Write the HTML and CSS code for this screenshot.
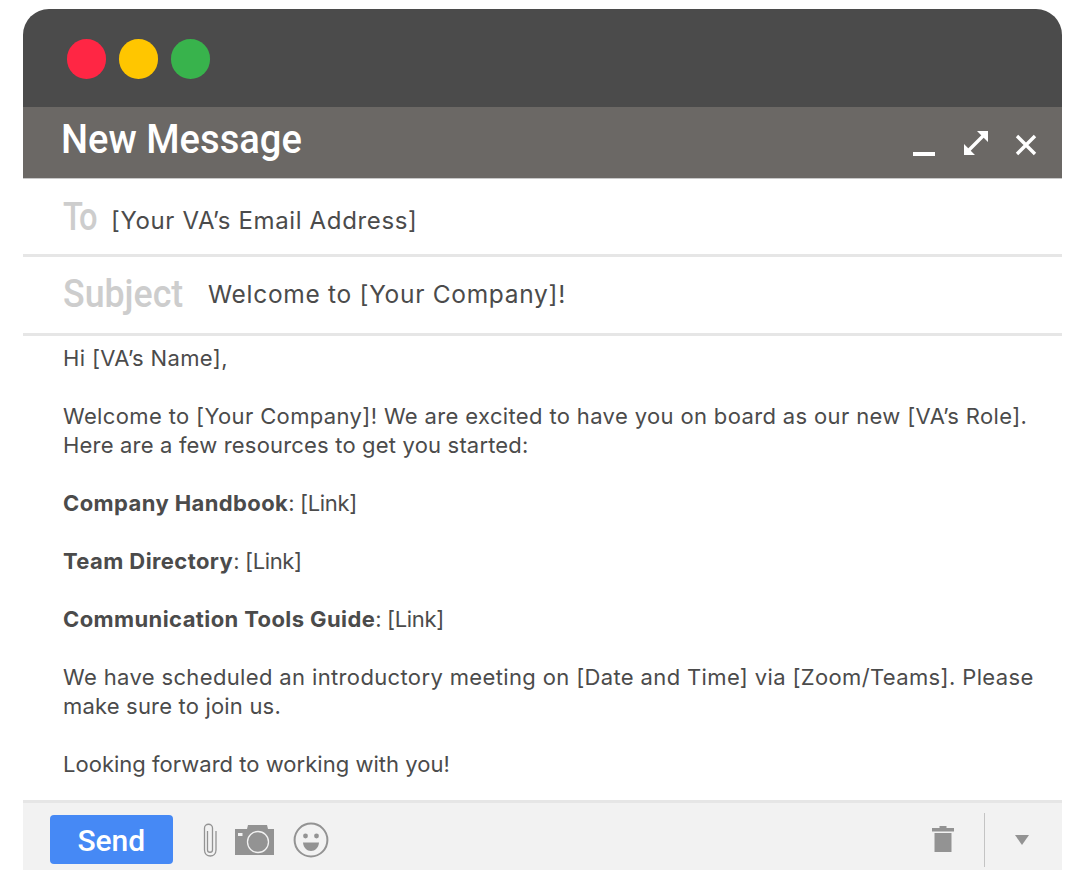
FILE: index.html
```html
<!DOCTYPE html>
<html lang="en">
<head>
<meta charset="utf-8">
<title>New Message</title>
<link rel="stylesheet" href="styles.css">
</head>
<body>
<main class="window">
  <div class="chrome">
    <span class="dot dot-red"></span>
    <span class="dot dot-yellow"></span>
    <span class="dot dot-green"></span>
  </div>
  <header class="titlebar">
    <h1 class="title">New Message</h1>
    <div class="controls">
      <svg class="ctl ctl-min" viewBox="0 0 22 4" width="22" height="4"><rect width="22" height="4" fill="#fff"/></svg>
      <svg class="ctl ctl-expand" viewBox="0 0 24 24" width="24" height="24"><path d="M24 0V11L13 0ZM0 24V13L11 24Z" fill="#fff"/><path d="M5 19 19 5" stroke="#fff" stroke-width="3.4" fill="none"/></svg>
      <svg class="ctl" viewBox="0 0 22 22" width="22" height="22"><path d="M2 2 20 20M20 2 2 20" stroke="#fff" stroke-width="3.4" fill="none"/></svg>
    </div>
  </header>
  <div class="field field-to">
    <span class="field-label">To</span>
    <span class="field-value">[Your VA’s Email Address]</span>
  </div>
  <div class="field field-subject">
    <span class="field-label">Subject</span>
    <span class="field-value">Welcome to [Your Company]!</span>
  </div>
  <section class="message">
    <p>Hi [VA’s Name],</p>
    <p>Welcome to [Your Company]! We are excited to have you on board as our new [VA’s Role].<br><span class="snug">Here are a few resources to get you started:</span></p>
    <p><strong>Company Handbook</strong><span class="link">: [Link]</span></p>
    <p><strong>Team Directory</strong><span class="link">: [Link]</span></p>
    <p><strong>Communication Tools Guide</strong><span class="link">: [Link]</span></p>
    <p>We have scheduled an introductory meeting on [Date and Time] via [Zoom/Teams]. Please<br><span class="snug">make sure to join us.</span></p>
    <p class="closing">Looking forward to working with you!</p>
  </section>
  <footer class="toolbar">
    <button class="send" type="button">Send</button>
    <svg class="clip" viewBox="0 0 16 36" width="16" height="36"><path d="M5.500 9V28C5.500 31 10.500 31 10.500 28V6C10.500 1 2.500 1 2.500 6V28C2.500 36 14 36 14 28V9" fill="none" stroke="#939393" stroke-width="1.300"/></svg>
    <svg class="camera" viewBox="0 0 39 30" width="39" height="30"><path fill="#939393" d="M0 4H12L13 0H32L33 4H39V30H0Z"/><circle cx="23" cy="17" r="10.500" fill="none" stroke="#f2f2f2" stroke-width="1.300"/><rect x="3" y="8" width="4.500" height="3" fill="#f2f2f2"/></svg>
    <svg class="smile" viewBox="0 0 36 36" width="36" height="36"><circle cx="18" cy="18" r="16.400" fill="none" stroke="#939393" stroke-width="2"/><circle cx="12.500" cy="14" r="2.400" fill="#939393"/><circle cx="23.500" cy="14" r="2.400" fill="#939393"/><path d="M10 20.500H26C25.500 26 22 29 18 29S10.500 26 10 20.500Z" fill="#939393"/></svg>
    <svg class="trash" viewBox="0 0 22 27" width="22" height="27"><path fill="#939393" d="M7.500 0H14.500V2H22V5.500H0V2H7.500ZM2.500 7H19.500V26H2.500Z"/></svg>
    <span class="divider"></span>
    <svg class="caret" viewBox="0 0 14 10" width="14" height="10"><path d="M0 0H14L7 10Z" fill="#939393"/></svg>
  </footer>
</main>
</body>
</html>
```
FILE: styles.css
```css
* { box-sizing: border-box; }
html, body { margin: 0; padding: 0; background: #fff; }
body { padding: 9px 18px 10px 23px; font-family: Inter, "Open Sans", sans-serif; color: #4b4b4b; }
.window { width: 1038.6px; height: 861px; display: flex; flex-direction: column; }
.window > * { flex: none; }
.chrome { height: 98px; background: #4b4b4b; border-radius: 26px 26px 0 0; display: flex; align-items: center; gap: 12.6px; padding: 2px 0 0 43.7px; }
.dot { width: 39.4px; height: 39.4px; border-radius: 50%; }
.dot-red { background: #ff2644; }
.dot-yellow { background: #ffc600; }
.dot-green { background: #38b34c; }
.titlebar { height: 72px; background: #6b6865; border-bottom: 1px solid #c8c8c8; display: flex; align-items: center; justify-content: space-between; padding: 0 24.6px 0 38px; }
.title { margin: 0 0 6px; font: 500 41px/1 Roboto, sans-serif; color: #fff; transform: scaleX(0.93); transform-origin: left center; }
.controls { display: flex; align-items: center; gap: 27.5px; padding-top: 4px; }
.ctl-min { align-self: flex-end; margin: 0 1.5px 2px 0; }
.ctl-expand { margin-bottom: 3px; }
.field { display: flex; align-items: center; border-bottom: 3px solid #e6e6e6; padding-left: 40px; color: #4b4b4b; }
.field-label { font: 500 38px/1 Roboto, sans-serif; color: #cdcdcd; transform-origin: left center; white-space: nowrap; }
.field-value { font-size: 24px; letter-spacing: 0.64px; padding-top: 7px; }
.field-to { height: 78px; }
.field-to .field-label { width: 48px; letter-spacing: -2px; transform: scaleX(0.86); }
.field-subject { height: 79px; }
.field-subject .field-label { width: 145px; margin-bottom: 3px; transform: scaleX(0.94); }
.field-subject .field-value { font-size: 24.5px; letter-spacing: 0.7px; padding: 0 0 3px; }
.message { height: 464px; padding: 8px 0 0 40px; font-size: 22px; line-height: 29px; letter-spacing: 0.36px; white-space: nowrap; }
.message p { margin: 0 0 29px; }
.message p:last-child { margin-bottom: 0; }
.message strong { font-weight: 700; letter-spacing: 0.4px; }
.link { letter-spacing: -0.35px; }
.snug { letter-spacing: 0.18px; }
.closing { letter-spacing: 0.02px; }
.toolbar { height: 70px; background: #f2f2f2; border-top: 3px solid #e6e6e6; display: flex; align-items: center; padding: 6px 32.6px 0 27px; }
.send { width: 122.6px; height: 49px; border: 0; border-radius: 4px; background: #4689f5; color: #fff; font: 500 30px/1 Roboto, sans-serif; padding: 2px 0 0; }
.clip { margin-left: 29.4px; }
.camera { margin-left: 17px; }
.smile { margin-left: 19px; }
.trash { margin-left: auto; }
.divider { width: 1px; height: 54px; background: #c4c4c4; margin: 0 30px; }
```
